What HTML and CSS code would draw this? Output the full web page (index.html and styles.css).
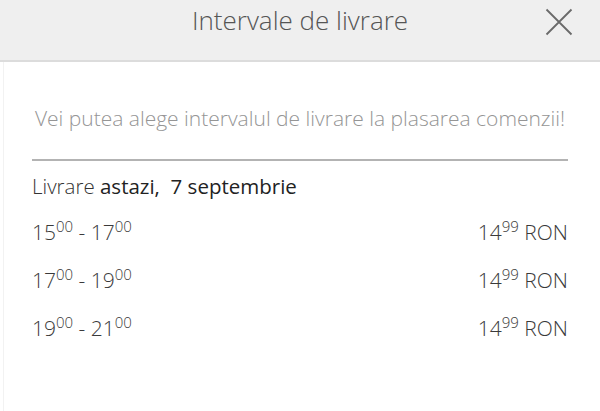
FILE: index.html
```html
<!DOCTYPE html>
<html>
<head>
<meta charset="utf-8">
<link rel="stylesheet" href="styles.css">
</head>
<body>
<div class="modal">
  <header class="header">
    <h1 class="title">Intervale de livrare</h1>
    <button class="close" aria-label="Inchide">
      <svg width="28" height="28" viewBox="0 0 28 28"><path d="M1.5 1.5 L26.5 26.5 M26.5 1.5 L1.5 26.5" stroke="#6a6a6a" stroke-width="1.8" fill="none"/></svg>
    </button>
  </header>
  <div class="body">
    <p class="note">Vei putea alege intervalul de livrare la plasarea comenzii!</p>
    <div class="day">
      <h2 class="day-title">Livrare <strong>astazi,&nbsp; 7 septembrie</strong></h2>
      <ul class="slots">
        <li class="slot"><span class="time">15<sup>00</sup> - 17<sup>00</sup></span><span class="price">14<sup>99</sup> RON</span></li>
        <li class="slot"><span class="time">17<sup>00</sup> - 19<sup>00</sup></span><span class="price">14<sup>99</sup> RON</span></li>
        <li class="slot"><span class="time">19<sup>00</sup> - 21<sup>00</sup></span><span class="price">14<sup>99</sup> RON</span></li>
      </ul>
    </div>
  </div>
</div>
</body>
</html>
```

FILE: styles.css
```css
* { box-sizing: border-box; }
html, body { margin: 0; padding: 0; background: #fff; }
body {
  width: 600px;
  height: 411px;
  overflow: hidden;
  font-family: "Open Sans", "Liberation Sans", sans-serif;
  color: #444;
}
.modal { width: 600px; height: 411px; display: flex; flex-direction: column; }
.header {
  height: 62px;
  background: #efefef;
  border-bottom: 2px solid #dcdcdc;
  display: flex;
  align-items: flex-start;
  justify-content: center;
  position: relative;
}
.title {
  margin: 2px 0 0 0;
  font-size: 26px;
  line-height: 36px;
  font-weight: 300;
  color: #555;
}
.close {
  position: absolute;
  right: 27px;
  top: 8px;
  width: 28px;
  height: 28px;
  padding: 0;
  border: 0;
  background: transparent;
  display: block;
}
.close svg { display: block; }
.body {
  flex: 1;
  border-left: 1px solid #f2f2f2;
  margin-left: 3px;
  padding: 0 32px 0 28px;
}
.note {
  margin: 40px 0 0 0;
  text-align: center;
  font-size: 21px;
  font-weight: 300;
  color: #959595;
  line-height: 32px;
  padding-bottom: 25px;
  border-bottom: 2px solid #b3b3b3;
}
.day-title {
  margin: 11px 0 0 0;
  font-size: 20.5px;
  font-weight: 300;
  line-height: 28px;
  color: #333;
}
.day-title strong { font-weight: 400; color: #222; }
.slots { list-style: none; margin: 8px 0 0 0; padding: 0; }
.slot {
  display: flex;
  justify-content: space-between;
  align-items: baseline;
  height: 48px;
  line-height: 48px;
  font-size: 21px;
  font-weight: 300;
  color: #3a3a3a;
}
.slot sup {
  font-size: 15px;
  line-height: 0;
  vertical-align: 8px;
}
```
